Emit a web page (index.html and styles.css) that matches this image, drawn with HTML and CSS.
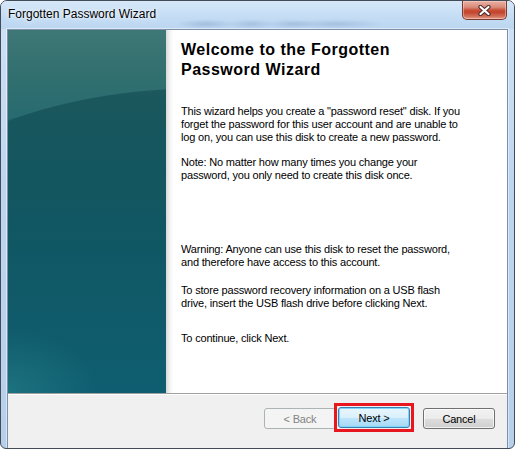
FILE: index.html
```html
<!DOCTYPE html>
<html>
<head>
    <title>Forgotten Password Wizard</title>
    <link rel="stylesheet" href="styles.css">
</head>
<body>
    <div class="window">
        <div class="titlebar">
            <span class="title">Forgotten Password Wizard</span>
            <span class="close-btn">
                <svg width="13" height="11" viewBox="0 0 13 11">
                    <path d="M2.5 2 L10.5 9 M10.5 2 L2.5 9" stroke="#4a2b28" stroke-width="4.2" stroke-linecap="round" fill="none"/>
                    <path d="M2.5 2 L10.5 9 M10.5 2 L2.5 9" stroke="#fff" stroke-width="2.2" stroke-linecap="round" fill="none"/>
                </svg>
            </span>
        </div>

        <div class="client">
            <div class="main">
                <div class="side-panel"></div>
                <div class="content">
                    <h1>Welcome to the Forgotten<br>Password Wizard</h1>
                    <p class="intro">This wizard helps you create a "password reset" disk. If you<br>forget the password for this user account and are unable to<br>log on, you can use this disk to create a new password.</p>
                    <p class="note">Note: No matter how many times you change your<br>password, you only need to create this disk once.</p>
                    <p class="warning">Warning: Anyone can use this disk to reset the password,<br>and therefore have access to this account.</p>
                    <p class="usb">To store password recovery information on a USB flash<br>drive, insert the USB flash drive before clicking Next.</p>
                    <p class="continue">To continue, click Next.</p>
                </div>
            </div>
            <div class="footer">
                <button class="btn" disabled>&lt; Back</button>
                <span class="highlight">
                    <button class="btn btn-default">Next &gt;</button>
                </span>
                <button class="btn btn-cancel">Cancel</button>
            </div>
        </div>
    </div>
</body>
</html>
```

FILE: styles.css
```css
body {
    margin: 0;
    padding: 0;
    background-color: #fff;
    font-family: "Liberation Sans", Arial, sans-serif;
}

.window {
    box-sizing: border-box;
    width: 515px;
    height: 449px;
    border: 1px solid #434c56;
    border-radius: 7px 7px 6px 6px;
    background: linear-gradient(#cfe3f7, #bdd6f0 40%, #b6d0ec);
    overflow: hidden;
}

/* title bar */
.titlebar {
    height: 28px;
    display: flex;
    align-items: flex-start;
    padding-left: 7px;
    background:
        radial-gradient(ellipse 30px 5px at 205px 23px, rgba(110, 140, 185, 0.35), transparent),
        radial-gradient(ellipse 25px 5px at 250px 23px, rgba(110, 140, 185, 0.3), transparent),
        radial-gradient(ellipse 25px 5px at 290px 23px, rgba(110, 140, 185, 0.3), transparent),
        radial-gradient(ellipse 50px 5px at 335px 23px, rgba(110, 140, 185, 0.3), transparent),
        linear-gradient(#d6e8f9, #c3dcf4 60%, #bcd6f1);
}

.title {
    margin-top: 6px;
    font-size: 12px;
    line-height: 15px;
    color: #000;
    text-shadow: 0 0 6px rgba(255, 255, 255, 0.9), 0 0 3px rgba(255, 255, 255, 0.8);
}

.close-btn {
    box-sizing: border-box;
    width: 45px;
    height: 19px;
    margin-left: auto;
    margin-right: 7px;
    border: 1px solid #7b3a30;
    border-top: none;
    border-radius: 0 0 5px 5px;
    background: linear-gradient(#e9b1a4, #d98a78 35%, #c9503a 50%, #c3432c 62%, #d0705a 85%, #e2a08c);
    box-shadow: inset 0 0 0 1px rgba(255, 220, 210, 0.45);
    display: flex;
    align-items: center;
    justify-content: center;
}

/* client area */
.client {
    margin: 0 6px 9px 6px;
    border: 1px solid #7d90a8;
    box-shadow: 0 0 0 1px rgba(255, 255, 255, 0.45);
    background-color: #f0f0f0;
}

.main {
    height: 363px;
    display: flex;
}

.side-panel {
    width: 158px;
    flex-shrink: 0;
    background:
        radial-gradient(ellipse 90px 60px at 0px 360px, rgba(60, 160, 160, 0.3), transparent),
        radial-gradient(400px 267px at 190px 325px, rgba(0, 55, 65, 0.4) 99.6%, transparent 100%),
        linear-gradient(#3f7777, #33706f 40px, #276b70 90px, #1c6c7a 200px, #187890);
}

.content {
    flex: 1;
    padding: 10px 0 0 15px;
    background: linear-gradient(90deg, #d8d8d8, #eeeeee 3px, #fbfbfb 6px, #fff 8px);
    color: #000;
}

h1 {
    margin: 0;
    font-size: 16px;
    line-height: 20px;
    font-weight: bold;
    letter-spacing: 0.5px;
}

.content p {
    margin: 0;
    font-size: 11px;
    line-height: 13px;
    letter-spacing: -0.18px;
}

.content .intro {
    margin-top: 25px;
}

.content .note {
    margin-top: 12px;
}

.content .warning {
    margin-top: 61px;
}

.content .usb {
    margin-top: 15px;
}

.content .continue {
    margin-top: 22px;
}

/* buttons */
.footer {
    height: 44px;
    border-top: 1px solid #a0a0a0;
    box-shadow: inset 0 1px #fff;
    display: flex;
    justify-content: flex-end;
    align-items: flex-start;
    padding: 14px 12px 0 0;
}

.btn {
    box-sizing: border-box;
    width: 72px;
    height: 21px;
    padding: 0;
    border: 1px solid #707070;
    border-radius: 3px;
    background: linear-gradient(#f2f2f2, #ebebeb 50%, #dddddd 51%, #cfcfcf);
    box-shadow: inset 0 0 0 1px rgba(255, 255, 255, 0.7);
    font-family: "Liberation Sans", Arial, sans-serif;
    font-size: 11px;
    letter-spacing: -0.18px;
    color: #000;
}

.btn:disabled {
    border-color: #adb2b5;
    background: #f4f4f4;
    box-shadow: none;
    color: #838383;
}

/* red annotation box round the Next button */
.highlight {
    display: flex;
    margin: -5px -4px 0 -2px;
    padding: 1px;
    border: 3px solid #e8161f;
}

.btn-default {
    border-color: #3c7fb1;
    background: linear-gradient(#eaf6fd, #d9f0fc 50%, #bee6fd 51%, #a7d9f5);
    box-shadow: inset 0 0 0 1px #7fd6fb;
}

.btn-cancel {
    margin-left: 13px;
}
```
